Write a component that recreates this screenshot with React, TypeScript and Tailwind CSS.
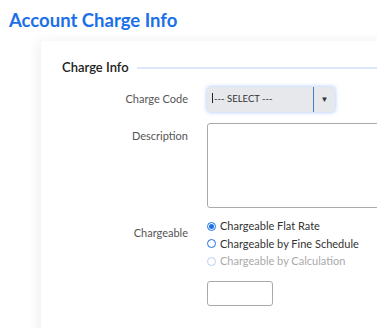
export default function App() {
  const radios = [
    { label: "Chargeable Flat Rate", checked: true, disabled: false },
    { label: "Chargeable by Fine Schedule", checked: false, disabled: false },
    { label: "Chargeable by Calculation", checked: false, disabled: true },
  ];

  return (
    <div className="h-screen w-full overflow-hidden bg-white font-['Lato',sans-serif]">
      <h1 className="pl-[9px] pt-[8px] text-[18.5px] font-bold leading-[24px] text-[#1b6fe8]">
        Account Charge Info
      </h1>

      <div className="ml-[41px] mt-[9px] h-[400px] w-[400px] rounded-tl-[4px] bg-white shadow-[-4px_0_12px_rgba(0,0,0,0.06)]">
        {/* section header */}
        <div className="flex items-center pl-[21px] pt-[17px]">
          <span className="text-[13px] font-semibold text-[#222]">Charge Info</span>
          <div className="ml-[8px] h-[2px] flex-1 bg-[#dde6fb]" />
        </div>

        {/* Charge Code */}
        <div className="mt-[9px] flex items-center">
          <label className="w-[147px] text-right text-[11px] text-[#555]">Charge Code</label>
          <div className="ml-[19px] flex h-[25px] w-[128px] items-center rounded-[3px] bg-[#e6e8ec] shadow-[0_0_4px_rgba(80,140,255,0.55)]">
            <span className="flex-1 pl-[5px] text-[9.5px] text-[#333]">
              <span className="mr-[1px] inline-block h-[10px] w-px translate-y-[1px] bg-[#222]" />
              --- SELECT ---
            </span>
            <div className="h-full w-px bg-[#3f7fc8]" />
            <div className="flex w-[21px] justify-center text-[8px] text-[#333]">▼</div>
          </div>
        </div>

        {/* Description */}
        <div className="mt-[11px] flex items-start">
          <label className="w-[147px] pt-[5px] text-right text-[11px] text-[#555]">Description</label>
          <div className="ml-[19px] h-[85px] flex-1 rounded-[3px] border border-[#aaa] bg-white" />
        </div>

        {/* Chargeable */}
        <div className="mt-[10px] flex items-start">
          <label className="w-[147px] pt-[7px] text-right text-[11px] text-[#555]">Chargeable</label>
          <div className="ml-[19px] flex flex-col">
            {radios.map((r) => (
              <div key={r.label} className="flex h-[17.5px] items-center">
                <span
                  className={
                    "flex h-[9px] w-[9px] items-center justify-center rounded-full border " +
                    (r.disabled ? "border-[#b9d0f5]" : "border-[#1b6fe8]")
                  }
                >
                  {r.checked && <span className="h-[5px] w-[5px] rounded-full bg-[#1b6fe8]" />}
                </span>
                <span className={"ml-[4px] text-[11px] " + (r.disabled ? "text-[#aaa]" : "text-[#333]")}>
                  {r.label}
                </span>
              </div>
            ))}
            <div className="mt-[11px] h-[25px] w-[66px] rounded-[3px] border border-[#aaa] bg-white" />
          </div>
        </div>
      </div>
    </div>
  );
}
